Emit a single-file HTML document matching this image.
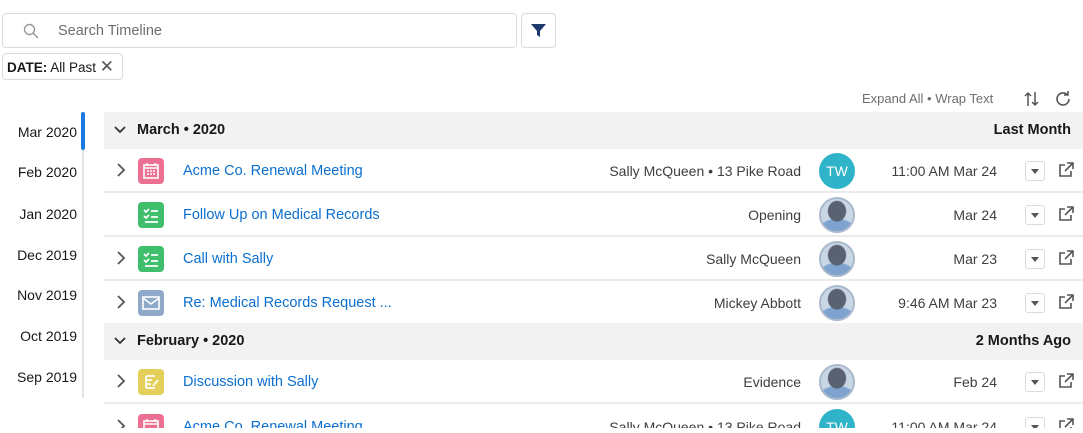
<!DOCTYPE html>
<html><head><meta charset="utf-8"><style>
*{box-sizing:border-box;margin:0;padding:0}
html,body{width:1083px;height:433px;overflow:hidden}
body{background:#fff;font-family:"Liberation Sans",sans-serif;color:#3e3e3c;position:relative;font-size:14px}
.a{position:absolute}
.search{left:2px;top:13px;width:515px;height:35px;border:1px solid #dddbda;border-radius:4px}
.filt{left:521px;top:13px;width:35px;height:35px;border:1px solid #dddbda;border-radius:4px}
.pill{left:2px;top:53px;width:121px;height:27px;border:1px solid #dddbda;border-radius:4px;font-size:13.5px;line-height:25px;padding-left:4px;color:#181818}
.nav{right:1006px;font-size:14px;color:#181818;text-align:right}
.hdr{left:104px;width:979px;height:37px;background:#f3f2f2;font-weight:bold;color:#181818;font-size:14.5px}
.row{left:104px;width:979px;height:44px;border-bottom:2px solid #ebebeb}
.chev{left:12px;top:13px}
.ic{left:34px;top:9px;width:26px;height:26px;border-radius:4px}
.t{left:79px;top:14px;color:#0b6fcf;font-size:14.5px}
.m{right:282px;top:14px;font-size:14px;text-align:right;white-space:nowrap}
.av{left:715px;top:4px;width:36px;height:36px;border-radius:50%}
.ph{background:radial-gradient(ellipse 30% 34% at 50% 38%,#5a6272 0 90%,transparent 100%),radial-gradient(ellipse 60% 40% at 50% 100%,#7fa3cf 0 90%,transparent 100%),#c9d6e4;border:2px solid #a9b9cc}
.d{right:86px;top:14px;font-size:14px;white-space:nowrap}
.dd{left:921px;top:12px;width:20px;height:20px;border:1px solid #dddbda;border-radius:3px}
.ex{left:953px;top:12px}
</style></head><body>
<div class="a search"><svg class="a" style="left:20px;top:9px" width="16" height="16" viewBox="0 0 16 16"><circle cx="6.5" cy="6.5" r="5" fill="none" stroke="#999" stroke-width="1.4"/><path d="M10 10l5 5" stroke="#999" stroke-width="1.5"/></svg><span class="a" style="left:55px;top:9px;color:#706e6b;font-size:14.5px">Search Timeline</span></div>
<div class="a filt"><svg class="a" style="left:9px;top:9px" width="15" height="15" viewBox="0 0 15 15"><path d="M0 1h15L9 8v6L6 12V8z" fill="#1b3a6b"/></svg></div>
<div class="a pill"><b>DATE:</b> All Past <span style="font-size:17px;color:#555">✕</span></div>
<div class="a" style="left:862px;top:91px;font-size:13px;color:#706e6b">Expand All • Wrap Text</div>
<svg class="a" style="left:1023px;top:90px" width="18" height="18" viewBox="0 0 18 18" fill="none" stroke="#555" stroke-width="1.5"><path d="M5 16V3M2 6l3-3 3 3M12 2v13M9 12l3 3 3-3"/></svg>
<svg class="a" style="left:1054px;top:90px" width="18" height="18" viewBox="0 0 18 18" fill="none" stroke="#555" stroke-width="1.6"><path d="M15 9a6 6 0 1 1-2-4.5"/><path d="M14 1v4h-4"/></svg>
<div class="a" style="left:82px;top:112px;width:2px;height:286px;background:#e5e5e5"></div>
<div class="a" style="left:81px;top:112px;width:4px;height:38px;background:#1b7ae0;border-radius:2px"></div>
<div class="a nav" style="top:124px">Mar 2020</div>
<div class="a nav" style="top:164px">Feb 2020</div>
<div class="a nav" style="top:206px">Jan 2020</div>
<div class="a nav" style="top:247px">Dec 2019</div>
<div class="a nav" style="top:287px">Nov 2019</div>
<div class="a nav" style="top:328px">Oct 2019</div>
<div class="a nav" style="top:369px">Sep 2019</div>

<div class="a hdr" style="top:112px"><svg class="a" style="left:10px;top:13px" width="12" height="10"><path d="M1 2l5 5 5-5" fill="none" stroke="#333" stroke-width="1.8"/></svg><span class="a" style="left:33px;top:10px">March • 2020</span><span class="a" style="right:12px;top:10px">Last Month</span></div>
<div class="a hdr" style="top:323px"><svg class="a" style="left:10px;top:13px" width="12" height="10"><path d="M1 2l5 5 5-5" fill="none" stroke="#333" stroke-width="1.8"/></svg><span class="a" style="left:33px;top:10px">February • 2020</span><span class="a" style="right:12px;top:10px">2 Months Ago</span></div>

<div class="a row" style="top:149px">
<svg class="a chev" width="10" height="16"><path d="M2 2l6 6-6 6" fill="none" stroke="#555" stroke-width="1.8"/></svg>
<div class="a ic" style="background:#eb7092"><svg width="26" height="26"><rect x="6" y="7" width="14" height="13" fill="none" stroke="#fff" stroke-width="1.6"/><path d="M6 10h14M9 5v3M17 5v3" stroke="#fff" stroke-width="1.6"/><path d="M9 13h2M12 13h2M15 13h2M9 16h2M12 16h2M15 16h2" stroke="#fff" stroke-width="1.5"/></svg></div>
<div class="a t">Acme Co. Renewal Meeting</div><div class="a m">Sally McQueen • 13 Pike Road</div>
<div class="a av" style="background:#2fb3c9;color:#fff;font-size:14px;text-align:center;line-height:36px">TW</div>
<div class="a d">11:00 AM Mar 24</div>
<div class="a dd"><svg width="18" height="18"><path d="M5 7h8l-4 5z" fill="#555"/></svg></div>
<svg class="a ex" width="18" height="18" fill="none" stroke="#555" stroke-width="1.6"><path d="M8 4H3v11h11v-5M10 2h6v6M16 2l-8 8"/></svg>
</div>
<div class="a row" style="top:193px">
<div class="a ic" style="background:#3fbe6b"><svg width="26" height="26"><path d="M6 8l2 2 3-3M6 14l2 2 3-3M13 9h7M13 15h7M7 20h13" fill="none" stroke="#fff" stroke-width="1.7"/></svg></div>
<div class="a t">Follow Up on Medical Records</div><div class="a m">Opening</div>
<div class="a av ph"></div>
<div class="a d">Mar 24</div>
<div class="a dd"><svg width="18" height="18"><path d="M5 7h8l-4 5z" fill="#555"/></svg></div>
<svg class="a ex" width="18" height="18" fill="none" stroke="#555" stroke-width="1.6"><path d="M8 4H3v11h11v-5M10 2h6v6M16 2l-8 8"/></svg>
</div>
<div class="a row" style="top:237px">
<svg class="a chev" width="10" height="16"><path d="M2 2l6 6-6 6" fill="none" stroke="#555" stroke-width="1.8"/></svg>
<div class="a ic" style="background:#3fbe6b"><svg width="26" height="26"><path d="M6 8l2 2 3-3M6 14l2 2 3-3M13 9h7M13 15h7M7 20h13" fill="none" stroke="#fff" stroke-width="1.7"/></svg></div>
<div class="a t">Call with Sally</div><div class="a m">Sally McQueen</div>
<div class="a av ph"></div>
<div class="a d">Mar 23</div>
<div class="a dd"><svg width="18" height="18"><path d="M5 7h8l-4 5z" fill="#555"/></svg></div>
<svg class="a ex" width="18" height="18" fill="none" stroke="#555" stroke-width="1.6"><path d="M8 4H3v11h11v-5M10 2h6v6M16 2l-8 8"/></svg>
</div>
<div class="a row" style="top:281px;height:42px;border-bottom:none">
<svg class="a chev" width="10" height="16"><path d="M2 2l6 6-6 6" fill="none" stroke="#555" stroke-width="1.8"/></svg>
<div class="a ic" style="background:#8fa9c9"><svg width="26" height="26"><rect x="5" y="7" width="16" height="12" fill="none" stroke="#fff" stroke-width="1.6"/><path d="M5 8l8 6 8-6" fill="none" stroke="#fff" stroke-width="1.6"/></svg></div>
<div class="a t">Re: Medical Records Request ...</div><div class="a m">Mickey Abbott</div>
<div class="a av ph"></div>
<div class="a d">9:46 AM Mar 23</div>
<div class="a dd"><svg width="18" height="18"><path d="M5 7h8l-4 5z" fill="#555"/></svg></div>
<svg class="a ex" width="18" height="18" fill="none" stroke="#555" stroke-width="1.6"><path d="M8 4H3v11h11v-5M10 2h6v6M16 2l-8 8"/></svg>
</div>
<div class="a row" style="top:360px">
<svg class="a chev" width="10" height="16"><path d="M2 2l6 6-6 6" fill="none" stroke="#555" stroke-width="1.8"/></svg>
<div class="a ic" style="background:#e3cf5a"><svg width="26" height="26"><path d="M8 7h9M8 11h6M8 15h5M8 19h9M8 7v12M15 17l5-6" fill="none" stroke="#fff" stroke-width="1.7"/></svg></div>
<div class="a t">Discussion with Sally</div><div class="a m">Evidence</div>
<div class="a av ph"></div>
<div class="a d">Feb 24</div>
<div class="a dd"><svg width="18" height="18"><path d="M5 7h8l-4 5z" fill="#555"/></svg></div>
<svg class="a ex" width="18" height="18" fill="none" stroke="#555" stroke-width="1.6"><path d="M8 4H3v11h11v-5M10 2h6v6M16 2l-8 8"/></svg>
</div>
<div class="a row" style="top:405px;border-bottom:none">
<svg class="a chev" width="10" height="16"><path d="M2 2l6 6-6 6" fill="none" stroke="#555" stroke-width="1.8"/></svg>
<div class="a ic" style="background:#eb7092"><svg width="26" height="26"><rect x="6" y="7" width="14" height="13" fill="none" stroke="#fff" stroke-width="1.6"/><path d="M6 10h14M9 5v3M17 5v3" stroke="#fff" stroke-width="1.6"/></svg></div>
<div class="a t">Acme Co. Renewal Meeting</div><div class="a m">Sally McQueen • 13 Pike Road</div>
<div class="a av" style="background:#2fb3c9;color:#fff;font-size:14px;text-align:center;line-height:36px">TW</div>
<div class="a d">11:00 AM Mar 24</div>
<div class="a dd"><svg width="18" height="18"><path d="M5 7h8l-4 5z" fill="#555"/></svg></div>
<svg class="a ex" width="18" height="18" fill="none" stroke="#555" stroke-width="1.6"><path d="M8 4H3v11h11v-5M10 2h6v6M16 2l-8 8"/></svg>
</div>
<div class="a" style="left:0;top:428px;width:1083px;height:5px;background:#fff"></div>
</body></html>
